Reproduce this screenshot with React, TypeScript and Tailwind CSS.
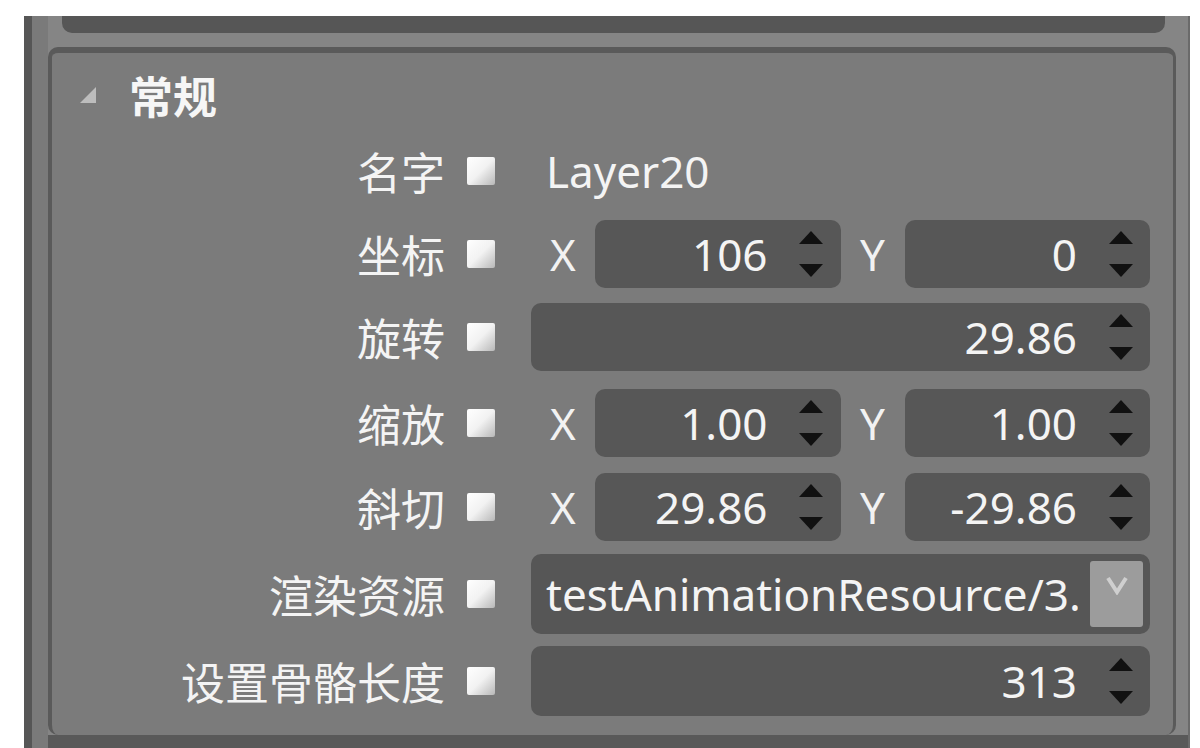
import React from "react";

const Check = () => (
  <div className="ml-[22px] h-[28px] w-[28px] shrink-0 rounded-[2px] bg-gradient-to-br from-white via-[#f2f2f2] to-[#b8b8b8]" />
);

const Arrows = () => (
  <div className="flex h-full w-[27px] shrink-0 flex-col items-center justify-center gap-[20px]">
    <svg width="24" height="13" viewBox="0 0 24 13">
      <polygon points="12,0 24,13 0,13" fill="#111" />
    </svg>
    <svg width="24" height="13" viewBox="0 0 24 13">
      <polygon points="0,0 24,0 12,13" fill="#111" />
    </svg>
  </div>
);

const Spin = ({ value, wide }: { value: string; wide?: boolean }) => (
  <div
    className={`flex h-full items-center rounded-[10px] bg-[#575757] pr-[16px] ${
      wide ? "w-full" : "flex-1"
    }`}
  >
    <div className="mr-[30px] flex-1 text-right font-['Noto_Sans',sans-serif] text-[44px] leading-none text-[#f4f4f4]">
      {value}
    </div>
    <Arrows />
  </div>
);

const Axis = ({ c }: { c: string }) => (
  <div className="flex w-[64px] shrink-0 justify-center font-['Noto_Sans',sans-serif] text-[44px] leading-none text-[#f2f2f2]">
    {c}
  </div>
);

const Label = ({ text }: { text: string }) => (
  <div className="w-[393px] shrink-0 text-right font-['Noto_Sans_CJK_SC',sans-serif] text-[44px] leading-none text-[#f4f4f4]">
    {text}
  </div>
);

const Row = ({
  label,
  h,
  mt,
  children,
}: {
  label: string;
  h: string;
  mt: string;
  children: React.ReactNode;
}) => (
  <div className={`flex items-center ${h} ${mt}`}>
    <Label text={label} />
    <Check />
    <div className="ml-[36px] flex h-full w-[619px] shrink-0 items-center">{children}</div>
  </div>
);

export default function App() {
  return (
    <div className="h-[748px] w-[1200px] overflow-hidden bg-white pl-[24px] pr-[10px] pt-[16px]">
      <div className="flex h-[732px] w-full bg-[#858585]">
        {/* left strip */}
        <div className="flex w-[24px] shrink-0">
          <div className="w-[8px] bg-[#565656]" />
          <div className="w-[16px] bg-[#7a7a7a]" />
        </div>
        {/* center */}
        <div className="flex flex-1 flex-col">
          <div className="ml-[14px] mr-[23px] h-[17px] rounded-b-[10px] bg-[#565656]" />
          <div className="h-[14px] bg-[#858585]" />
          <div className="mr-[12px] flex h-[688px] flex-col rounded-[10px] border-l-[4px] border-r-[3px] border-t-[6px] border-[#5a5a5a] bg-[#7b7b7b]">
            {/* header */}
            <div className="flex h-[84px] items-center">
              <svg className="ml-[28px]" width="16" height="16" viewBox="0 0 16 16">
                <polygon points="16,0 16,16 0,16" fill="#bdbdbd" />
              </svg>
              <div className="ml-[33px] font-['Noto_Sans_CJK_SC',sans-serif] text-[44px] font-bold leading-none text-[#f6f6f6]">
                常规
              </div>
            </div>

            <Row label="名字" h="h-[68px]" mt="mt-0">
              <div className="pl-[15px] font-['Noto_Sans',sans-serif] text-[44px] leading-none text-[#f4f4f4]">
                Layer20
              </div>
            </Row>

            <Row label="坐标" h="h-[68px]" mt="mt-[15px]">
              <Axis c="X" />
              <Spin value="106" />
              <Axis c="Y" />
              <Spin value="0" />
            </Row>

            <Row label="旋转" h="h-[68px]" mt="mt-[15px]">
              <Spin value="29.86" wide />
            </Row>

            <Row label="缩放" h="h-[68px]" mt="mt-[18px]">
              <Axis c="X" />
              <Spin value="1.00" />
              <Axis c="Y" />
              <Spin value="1.00" />
            </Row>

            <Row label="斜切" h="h-[68px]" mt="mt-[16px]">
              <Axis c="X" />
              <Spin value="29.86" />
              <Axis c="Y" />
              <Spin value="-29.86" />
            </Row>

            <Row label="渲染资源" h="h-[80px]" mt="mt-[13px]">
              <div className="flex h-full w-full items-center rounded-[10px] bg-[#565656] pr-[7px]">
                <div className="ml-[15px] w-[532px] overflow-hidden whitespace-nowrap font-['Noto_Sans',sans-serif] text-[44px] leading-none text-[#f4f4f4]">
                  testAnimationResource/3.json
                </div>
                <div className="ml-auto flex h-[66px] w-[53px] items-start justify-center rounded-[3px] bg-[#9c9c9c] pt-[14px]">
                  <svg width="22" height="20" viewBox="0 0 22 20">
                    <polyline points="2,3 11,17 20,3" fill="none" stroke="#cfcfcf" strokeWidth="4" />
                  </svg>
                </div>
              </div>
            </Row>

            <Row label="设置骨骼长度" h="h-[70px]" mt="mt-[12px]">
              <Spin value="313" wide />
            </Row>
          </div>
          <div className="flex-1 bg-[#595959]" />
        </div>
        {/* right edge */}
        <div className="w-[2px] shrink-0 bg-[#6a6a6a]" />
      </div>
    </div>
  );
}
